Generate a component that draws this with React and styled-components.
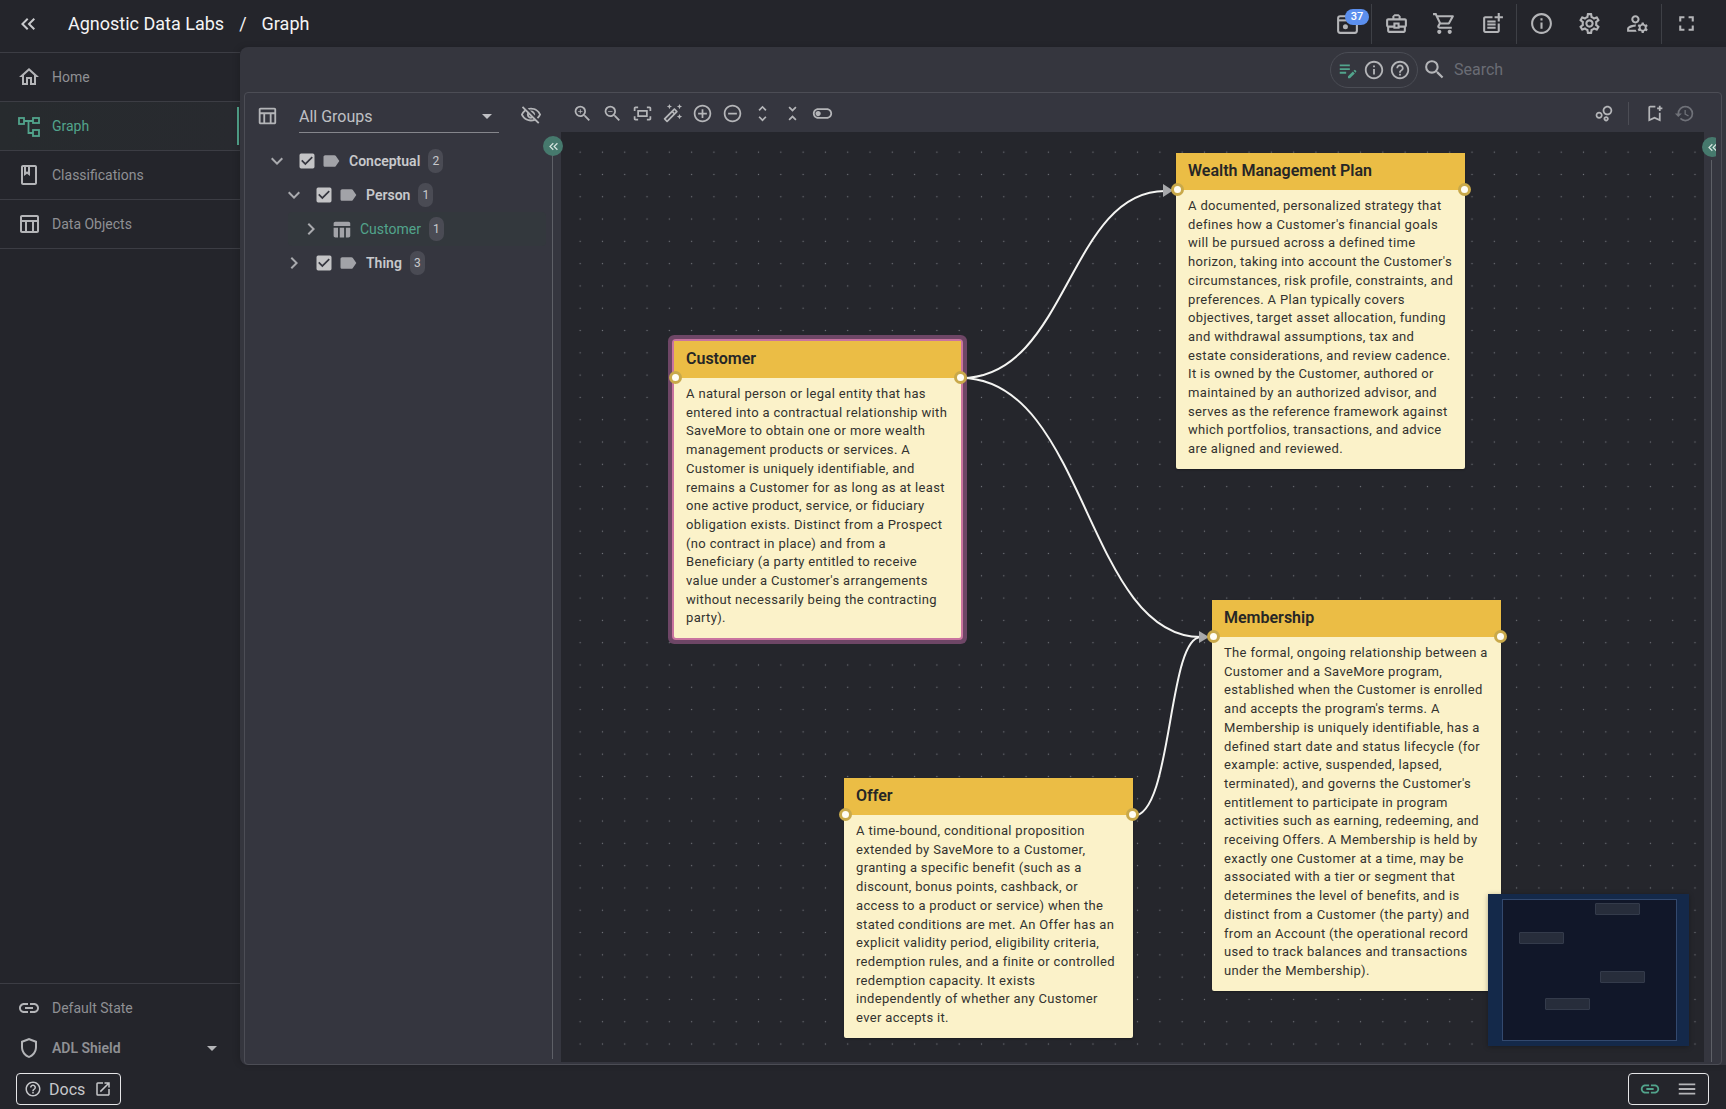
import React from "react"
import styled, { createGlobalStyle } from "styled-components"
import {
  MdKeyboardDoubleArrowLeft,
  MdOutlineHome,
  MdOutlineClass,
  MdOutlineTableChart,
  MdTableChart,
  MdLink,
  MdOutlineShield,
  MdHelpOutline,
  MdOpenInNew,
  MdOutlineBusinessCenter,
  MdOutlineShoppingCart,
  MdOutlinePostAdd,
  MdInfoOutline,
  MdOutlineSettings,
  MdOutlineManageAccounts,
  MdFullscreen,
  MdOutlineEditNote,
  MdSearch,
  MdOutlineZoomIn,
  MdOutlineZoomOut,
  MdOutlineFitScreen,
  MdOutlineAutoFixHigh,
  MdAddCircleOutline,
  MdRemoveCircleOutline,
  MdUnfoldMore,
  MdUnfoldLess,
  MdOutlineToggleOff,
  MdOutlineBubbleChart,
  MdOutlineBookmarkAdd,
  MdHistory,
  MdLabel,
  MdCheckBox,
  MdOutlineVisibilityOff,
  MdExpandMore,
  MdChevronRight,
  MdMenu,
  MdArrowDropDown,
} from "react-icons/md"

const GREEN = "#52a48c"
const MUTED = "#8f9094"
const ICON = "#b4b5b8"

const GlobalStyle = createGlobalStyle`
  html, body {
    margin: 0;
    padding: 0;
    background: #24252b;
    font-family: Roboto, "Liberation Sans", sans-serif;
  }
  * { box-sizing: border-box; }
`

const Page = styled.div`
  width: 1726px;
  height: 1109px;
  overflow: hidden;
  display: grid;
  grid-template-columns: 240px 1fr;
  grid-template-rows: 47px 1fr 44px;
  background: #24252b;
`

/* top bar */
const Header = styled.header`
  grid-column: 1 / 3;
  display: flex;
  align-items: center;
  padding: 0 16px 0 16px;
  color: #fff;
`
const Collapse = styled.span`
  display: flex;
  width: 24px;
  color: #c9cacd;
  margin-right: 28px;
  font-size: 24px;
`
const Crumb = styled.span`
  font-size: 18px;
  font-weight: 400;
  color: #f4f4f5;
`
const CrumbSlash = styled(Crumb)`
  margin: 0 15px;
`
const HeaderIcons = styled.div`
  margin-left: auto;
  display: flex;
  align-items: center;
  height: 44px;
`
const HeaderCell = styled.span`
  position: relative;
  width: 48px;
  display: flex;
  justify-content: center;
  font-size: 25px;
  color: ${ICON};
`
const HeaderSep = styled.span`
  width: 1px;
  height: 40px;
  background: #3e4046;
`
const CountBadge = styled.span`
  position: absolute;
  top: -2px;
  left: 22px;
  width: 24px;
  height: 16px;
  border-radius: 8px;
  background: #5b8fee;
  color: #fff;
  font-size: 11px;
  font-weight: 500;
  line-height: 16px;
  text-align: center;
`

/* left navigation */
const Sidebar = styled.nav`
  display: flex;
  flex-direction: column;
  padding-top: 5px;
  margin-bottom: -3px;
`
const NavItem = styled.div`
  position: relative;
  height: 49px;
  display: flex;
  align-items: center;
  gap: 11px;
  padding-left: 17px;
  font-size: 14px;
  color: ${(p) => (p.$active ? GREEN : MUTED)};
  border-top: 1px solid #3c3d44;
  background: ${(p) => (p.$active ? "linear-gradient(90deg, #272b2e, #282a2f)" : "transparent")};

  svg {
    font-size: 24px;
    flex: none;
    color: ${(p) => (p.$active ? GREEN : ICON)};
  }
  ${(p) =>
    p.$active &&
    `&::after {
      content: "";
      position: absolute;
      right: 1px;
      top: 5px;
      bottom: 5px;
      width: 2px;
      background: ${GREEN};
    }`}
  &:nth-of-type(4) {
    border-bottom: 1px solid #3c3d44;
    height: 50px;
  }
`
const SidebarFoot = styled.div`
  margin-top: auto;
  border-top: 1px solid #3c3d44;
  padding-top: 4px;
`
const FootRow = styled.div`
  height: 40px;
  display: flex;
  align-items: center;
  gap: 11px;
  padding: 0 16px 0 17px;
  font-size: 14px;
  font-weight: ${(p) => (p.$bold ? 600 : 400)};
  color: ${MUTED};

  svg {
    font-size: 24px;
    color: ${ICON};
    flex: none;
  }
`
const FootCaret = styled.span`
  margin-left: auto;
  margin-right: 0;
  display: flex;
`

/* main area */
const Main = styled.main`
  background: #35363e;
  border-top-left-radius: 8px;
  border-bottom-left-radius: 8px;
  box-shadow: -2px 0 6px rgba(0, 0, 0, 0.14);
  display: flex;
  flex-direction: column;
  padding: 0 4px 0 4px;
  z-index: 1;
`
const SearchRow = styled.div`
  height: 45px;
  display: flex;
  justify-content: flex-end;
  align-items: center;
`
const Pill = styled.div`
  width: 88px;
  height: 36px;
  border: 1px solid #4b4d55;
  border-radius: 18px;
  display: flex;
  align-items: center;
  gap: 4px;
  padding-left: 6px;
  font-size: 22px;
  color: ${ICON};
`
const SearchBox = styled.div`
  width: 304px;
  display: flex;
  align-items: center;
  gap: 7px;
  padding-left: 4px;
  color: #6a6c74;
  font-size: 16px;

  svg {
    font-size: 25px;
    color: ${ICON};
  }
`
const Panel = styled.section`
  flex: 1;
  min-height: 0;
  display: flex;
  border: 1px solid #4c4d55;
  border-radius: 4px;
  background: #35363f;
  overflow: hidden;
  padding-bottom: 2px;
`

/* tree column */
const TreePanel = styled.aside`
  position: relative;
  width: 316px;
  flex: none;
  display: flex;
  flex-direction: column;
`
const GroupBar = styled.div`
  height: 39px;
  display: flex;
  align-items: center;
  padding-left: 11px;
  color: ${ICON};

  > svg {
    font-size: 22px;
    flex: none;
    margin-top: 6px;
  }
`
const GroupSelect = styled.div`
  width: 200px;
  height: 39px;
  margin-left: 21px;
  padding-top: 6px;
  border-bottom: 1px solid #85868c;
  display: flex;
  align-items: center;
  justify-content: space-between;
  font-size: 16px;
  color: #bfc0c4;
  margin-top: 2px;
`
const EyeWrap = styled.span`
  display: flex;
  margin-left: 21px;
  margin-top: 5px;
  font-size: 22px;
`
const Tree = styled.div`
  position: relative;
  flex: 1;
  padding-top: 12px;
  margin-right: 7px;

  &::after {
    content: "";
    position: absolute;
    top: 16px;
    bottom: 3px;
    right: 1px;
    width: 1px;
    background: #5e6067;
  }
`
const TreeRow = styled.div`
  height: 34px;
  display: flex;
  align-items: center;
  margin-left: ${(p) => 9 + 17 * p.$depth}px;
  margin-right: 8px;
  padding-left: 11px;
  background: ${(p) => (p.$selected ? "#33383d" : "transparent")};
  border-radius: 4px;
  color: ${ICON};
`
const Chevron = styled.span`
  width: 24px;
  display: flex;
  font-size: 24px;
  color: #a9aaae;
  flex: none;
`
const Check = styled.span`
  display: flex;
  margin-left: 8px;
  font-size: 20px;
  color: #c4c4c6;
`
const TagIcon = styled.span`
  display: flex;
  margin-left: 4px;
  font-size: 20px;
  color: #a2a3a8;
`
const TableIcon = styled(TagIcon)`
  margin-left: 8px;
  font-size: 21px;
`
const TreeLabel = styled.span`
  margin-left: 8px;
  font-size: 14px;
  font-weight: ${(p) => (p.$selected ? 400 : 600)};
  color: ${(p) => (p.$selected ? GREEN : "#c8c9cc")};
`
const TreeBadge = styled.span`
  margin-left: 8px;
  width: 15px;
  height: 24px;
  border-radius: 7px;
  background: #4a4b54;
  color: #c8c9cc;
  font-size: 12px;
  line-height: 24px;
  text-align: center;
`
const RoundToggle = styled.span`
  position: absolute;
  top: ${(p) => p.$top}px;
  right: ${(p) => p.$right}px;
  width: 20px;
  height: 20px;
  border-radius: 50%;
  background: #46796d;
  color: #d5e4df;
  display: flex;
  align-items: center;
  justify-content: center;
  font-size: 15px;
  z-index: 3;
`
const ClippedToggle = styled(RoundToggle)`
  clip-path: inset(0 6px 0 0);
`

/* graph column */
const GraphColumn = styled.div`
  flex: 1;
  min-width: 0;
  display: flex;
  flex-direction: column;
`
const Toolbar = styled.div`
  height: 39px;
  flex: none;
  display: flex;
  align-items: center;
  padding: 2px 22px 0 6px;
`
const ToolButton = styled.span`
  width: 30px;
  display: flex;
  justify-content: center;
  font-size: 21px;
  color: ${(p) => (p.$dim ? "#6f7178" : ICON)};
`
const ToolSep = styled.span`
  width: 1px;
  height: 23px;
  background: #4c4d55;
  margin: 0 10px;
`
const ToolSpacer = styled.span`
  flex: 1;
`
const CanvasRow = styled.div`
  position: relative;
  flex: 1;
  min-height: 0;
  display: flex;
`
const Canvas = styled.div`
  position: relative;
  flex: 1;
  background-color: #25262c;
  background-image: radial-gradient(circle at center, #74767d 0.7px, transparent 1px);
  background-size: 22.3px 22.3px;
  background-position: 8px 9px;
  overflow: hidden;
`
const RightStrip = styled.div`
  position: relative;
  width: 17px;
  flex: none;

  &::after {
    content: "";
    position: absolute;
    top: 28px;
    bottom: 0;
    left: 7px;
    width: 1px;
    background: #5e6067;
  }
`
const Edges = styled.svg`
  position: absolute;
  inset: 0;
  width: 100%;
  height: 100%;
`
const Node = styled.article`
  position: absolute;
  left: ${(p) => p.$x}px;
  top: ${(p) => p.$y}px;
  width: ${(p) => p.$w}px;
  background: #fbf2c9;
  border-radius: 2px;
  box-shadow: ${(p) => (p.$selected ? "0 0 0 2px #c9749f, 0 0 0 6px #6e4666" : "0 1px 2px rgba(0,0,0,.3)")};
`
const NodeTitle = styled.h3`
  position: relative;
  margin: 0;
  height: 37px;
  padding: 0 12px 2px;
  display: flex;
  align-items: center;
  background: #ebbd45;
  color: #262626;
  font-size: 16px;
  font-weight: 600;
`
const Handle = styled.span`
  position: absolute;
  bottom: -6px;
  ${(p) => (p.$side === "left" ? "left: -5.5px;" : "right: -6px;")}
  width: 13px;
  height: 13px;
  border-radius: 50%;
  background: #fffdf4;
  border: 3px solid #c9a94a;
  z-index: 2;
`
const NodeBody = styled.p`
  margin: 0;
  padding: 7px ${(p) => (p.$selected ? 12 : 11)}px 10px 12px;
  font-size: 13px;
  line-height: 18.7px;
  letter-spacing: 0.34px;
  color: #33332f;
`
const MiniMap = styled.div`
  position: absolute;
  left: 927px;
  top: 762px;
  width: 201px;
  height: 152px;
  background: #14294a;
  padding: 5px 12px 5px 14px;
  z-index: 4;
  box-shadow: 0 1px 5px rgba(0, 0, 0, 0.3);
`
const MiniView = styled.div`
  position: relative;
  width: 100%;
  height: 100%;
  background: #111729;
  border: 1px solid #33496e;
`
const MiniNode = styled.span`
  position: absolute;
  left: ${(p) => p.$x}px;
  top: ${(p) => p.$y}px;
  width: 45px;
  height: 12px;
  border-radius: 1px;
  background: #272d3b;
  border: 1px solid #343b4b;
`

/* bottom bar */
const Footer = styled.footer`
  grid-column: 1 / 3;
  display: flex;
  justify-content: space-between;
  align-items: flex-start;
  padding: 8px 17px 0 16px;
  position: relative;
`
const DocsButton = styled.div`
  width: 105px;
  height: 32px;
  border: 1px solid #e6e6e8;
  border-radius: 4px;
  display: flex;
  align-items: center;
  gap: 7px;
  padding-left: 7px;
  color: #c6c7ca;
  font-size: 16px;

  svg {
    font-size: 18px;
    flex: none;
  }
  svg:last-child {
    margin-left: 2px;
  }
`
const LinkGroup = styled.div`
  width: 81px;
  height: 32px;
  border: 1px solid #e6e6e8;
  border-radius: 4px;
  display: flex;
  align-items: center;
  justify-content: space-between;
  padding: 0 10px;
  font-size: 22px;
  color: ${ICON};
`
const GreenIcon = styled.span`
  display: flex;
  color: ${GREEN};
`

function CalendarDot() {
  return (
    <svg width="1em" height="1em" viewBox="0 0 24 24" fill="none" stroke="currentColor" strokeWidth="2">
      <rect x="3" y="5" width="18" height="16" rx="2" />
      <path d="M3 9h18" />
      <circle cx="10" cy="15" r="2.4" fill="currentColor" stroke="none" />
    </svg>
  )
}

function GraphIcon() {
  return (
    <svg width="1em" height="1em" viewBox="0 0 24 24" fill="none" stroke="currentColor" strokeWidth="1.8">
      <rect x="2" y="4" width="5" height="6" />
      <rect x="16" y="4" width="6" height="5" />
      <rect x="16" y="16" width="6" height="6" />
      <path d="M7 7h9M11.5 7v12H16" />
    </svg>
  )
}

const nodes = [
  {
    title: "Customer",
    x: 113,
    y: 209,
    w: 287,
    selected: true,
    text: "A natural person or legal entity that has entered into a contractual relationship with SaveMore to obtain one or more wealth management products or services. A Customer is uniquely identifiable, and remains a Customer for as long as at least one active product, service, or fiduciary obligation exists. Distinct from a Prospect (no contract in place) and from a Beneficiary (a party entitled to receive value under a Customer's arrangements without necessarily being the contracting party).",
  },
  {
    title: "Wealth Management Plan",
    x: 615,
    y: 21,
    w: 289,
    text: "A documented, personalized strategy that defines how a Customer's financial goals will be pursued across a defined time horizon, taking into account the Customer's circumstances, risk profile, constraints, and preferences. A Plan typically covers objectives, target asset allocation, funding and withdrawal assumptions, tax and estate considerations, and review cadence. It is owned by the Customer, authored or maintained by an authorized advisor, and serves as the reference framework against which portfolios, transactions, and advice are aligned and reviewed.",
  },
  {
    title: "Membership",
    x: 651,
    y: 468,
    w: 289,
    text: "The formal, ongoing relationship between a Customer and a SaveMore program, established when the Customer is enrolled and accepts the program's terms. A Membership is uniquely identifiable, has a defined start date and status lifecycle (for example: active, suspended, lapsed, terminated), and governs the Customer's entitlement to participate in program activities such as earning, redeeming, and receiving Offers. A Membership is held by exactly one Customer at a time, may be associated with a tier or segment that determines the level of benefits, and is distinct from a Customer (the party) and from an Account (the operational record used to track balances and transactions under the Membership).",
  },
  {
    title: "Offer",
    x: 283,
    y: 646,
    w: 289,
    text: "A time-bound, conditional proposition extended by SaveMore to a Customer, granting a specific benefit (such as a discount, bonus points, cashback, or access to a product or service) when the stated conditions are met. An Offer has an explicit validity period, eligibility criteria, redemption rules, and a finite or controlled redemption capacity. It exists independently of whether any Customer ever accepts it.",
  },
]

const miniNodes = [
  [92, 3],
  [16, 32],
  [97, 71],
  [42, 98],
]

function GraphNode({ node }) {
  return (
    <Node $x={node.x} $y={node.y} $w={node.w} $selected={node.selected}>
      <NodeTitle>
        {node.title}
        <Handle $side="left" />
        <Handle $side="right" />
      </NodeTitle>
      <NodeBody $selected={node.selected}>{node.text}</NodeBody>
    </Node>
  )
}

export default function App() {
  return (
    <Page>
      <GlobalStyle />
      <Header>
        <Collapse>
          <MdKeyboardDoubleArrowLeft />
        </Collapse>
        <Crumb>Agnostic Data Labs</Crumb>
        <CrumbSlash>/</CrumbSlash>
        <Crumb>Graph</Crumb>
        <HeaderIcons>
          <HeaderCell>
            <CalendarDot />
            <CountBadge>37</CountBadge>
          </HeaderCell>
          <HeaderSep />
          <HeaderCell>
            <MdOutlineBusinessCenter />
          </HeaderCell>
          <HeaderCell>
            <MdOutlineShoppingCart />
          </HeaderCell>
          <HeaderCell>
            <MdOutlinePostAdd />
          </HeaderCell>
          <HeaderSep />
          <HeaderCell>
            <MdInfoOutline />
          </HeaderCell>
          <HeaderCell>
            <MdOutlineSettings />
          </HeaderCell>
          <HeaderCell>
            <MdOutlineManageAccounts />
          </HeaderCell>
          <HeaderSep />
          <HeaderCell>
            <MdFullscreen />
          </HeaderCell>
        </HeaderIcons>
      </Header>

      <Sidebar>
        <NavItem>
          <MdOutlineHome />
          Home
        </NavItem>
        <NavItem $active>
          <GraphIcon />
          Graph
        </NavItem>
        <NavItem>
          <MdOutlineClass />
          Classifications
        </NavItem>
        <NavItem>
          <MdOutlineTableChart />
          Data Objects
        </NavItem>
        <SidebarFoot>
          <FootRow>
            <MdLink />
            Default State
          </FootRow>
          <FootRow $bold>
            <MdOutlineShield />
            ADL Shield
            <FootCaret>
              <MdArrowDropDown />
            </FootCaret>
          </FootRow>
        </SidebarFoot>
      </Sidebar>

      <Main>
        <SearchRow>
          <Pill>
            <GreenIcon>
              <MdOutlineEditNote />
            </GreenIcon>
            <MdInfoOutline />
            <MdHelpOutline />
          </Pill>
          <SearchBox>
            <MdSearch />
            Search
          </SearchBox>
        </SearchRow>
        <Panel>
          <TreePanel>
            <GroupBar>
              <MdOutlineTableChart />
              <GroupSelect>
                All Groups
                <MdArrowDropDown size={24} />
              </GroupSelect>
              <EyeWrap>
                <MdOutlineVisibilityOff />
              </EyeWrap>
            </GroupBar>
            <Tree>
              <RoundToggle $top={4} $right={-9}>
                <MdKeyboardDoubleArrowLeft />
              </RoundToggle>
              <TreeRow $depth={0}>
                <Chevron>
                  <MdExpandMore />
                </Chevron>
                <Check>
                  <MdCheckBox />
                </Check>
                <TagIcon>
                  <MdLabel />
                </TagIcon>
                <TreeLabel>Conceptual</TreeLabel>
                <TreeBadge>2</TreeBadge>
              </TreeRow>
              <TreeRow $depth={1}>
                <Chevron>
                  <MdExpandMore />
                </Chevron>
                <Check>
                  <MdCheckBox />
                </Check>
                <TagIcon>
                  <MdLabel />
                </TagIcon>
                <TreeLabel>Person</TreeLabel>
                <TreeBadge>1</TreeBadge>
              </TreeRow>
              <TreeRow $depth={2} $selected>
                <Chevron>
                  <MdChevronRight />
                </Chevron>
                <TableIcon>
                  <MdTableChart />
                </TableIcon>
                <TreeLabel $selected>Customer</TreeLabel>
                <TreeBadge>1</TreeBadge>
              </TreeRow>
              <TreeRow $depth={1}>
                <Chevron>
                  <MdChevronRight />
                </Chevron>
                <Check>
                  <MdCheckBox />
                </Check>
                <TagIcon>
                  <MdLabel />
                </TagIcon>
                <TreeLabel>Thing</TreeLabel>
                <TreeBadge>3</TreeBadge>
              </TreeRow>
            </Tree>
          </TreePanel>

          <GraphColumn>
            <Toolbar>
              <ToolButton>
                <MdOutlineZoomIn />
              </ToolButton>
              <ToolButton>
                <MdOutlineZoomOut />
              </ToolButton>
              <ToolButton>
                <MdOutlineFitScreen />
              </ToolButton>
              <ToolButton>
                <MdOutlineAutoFixHigh />
              </ToolButton>
              <ToolButton>
                <MdAddCircleOutline />
              </ToolButton>
              <ToolButton>
                <MdRemoveCircleOutline />
              </ToolButton>
              <ToolButton>
                <MdUnfoldMore />
              </ToolButton>
              <ToolButton>
                <MdUnfoldLess />
              </ToolButton>
              <ToolButton>
                <MdOutlineToggleOff />
              </ToolButton>
              <ToolSpacer />
              <ToolButton>
                <MdOutlineBubbleChart />
              </ToolButton>
              <ToolSep />
              <ToolButton>
                <MdOutlineBookmarkAdd />
              </ToolButton>
              <ToolButton $dim>
                <MdHistory />
              </ToolButton>
            </Toolbar>
            <CanvasRow>
              <Canvas>
                <Edges>
                  <g fill="none" stroke="#f4f4f2" strokeWidth="2">
                    <path d="M400 246 C 507 246, 507 59, 604 59" />
                    <path d="M400 246 C 525 246, 525 505, 640 505" />
                    <path d="M572 684 C 612 684, 606 505, 640 505" />
                  </g>
                  <g fill="#a7a8ab">
                    <polygon points="602,52 612,58.5 602,65" />
                    <polygon points="638,499 648,505 638,511" />
                  </g>
                </Edges>
                {nodes.map((node) => (
                  <GraphNode key={node.title} node={node} />
                ))}
                <MiniMap>
                  <MiniView>
                    {miniNodes.map(([x, y]) => (
                      <MiniNode key={x} $x={x} $y={y} />
                    ))}
                  </MiniView>
                </MiniMap>
              </Canvas>
              <RightStrip>
                <ClippedToggle $top={5} $right={-1}>
                  <MdKeyboardDoubleArrowLeft />
                </ClippedToggle>
              </RightStrip>
            </CanvasRow>
          </GraphColumn>
        </Panel>
      </Main>

      <Footer>
        <DocsButton>
          <MdHelpOutline />
          Docs
          <MdOpenInNew />
        </DocsButton>
        <LinkGroup>
          <GreenIcon>
            <MdLink />
          </GreenIcon>
          <MdMenu />
        </LinkGroup>
      </Footer>
    </Page>
  )
}
